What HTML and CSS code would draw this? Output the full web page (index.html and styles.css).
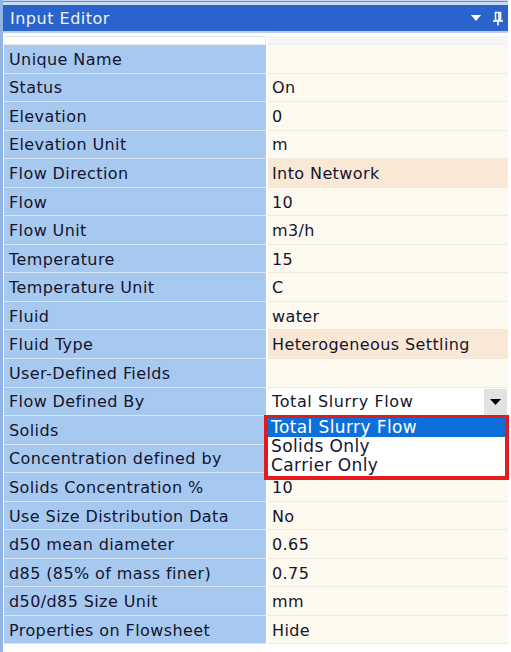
FILE: index.html
```html
<!DOCTYPE html>
<html>
<head>
<meta charset="utf-8">
<link rel="stylesheet" href="styles.css">
</head>
<body>
<div class="frame">
  <div class="top-strip"></div>
  <div class="titlebar">
    <span class="title">Input Editor</span>
    <span class="tools">
      <svg class="ico" width="12" height="8" viewBox="0 0 12 8"><path d="M1 1 H11 L6 7 Z" fill="#fff"/></svg>
      <svg class="ico" width="12" height="15" viewBox="0 0 12 15"><path d="M3.5 1.5 H8.5 V9.5 H3.5 Z" fill="none" stroke="#fff" stroke-width="1.6"/><path d="M7 2 V9" stroke="#fff" stroke-width="1.6"/><path d="M1 10 H11" stroke="#fff" stroke-width="1.6"/><path d="M6 10 V14.5" stroke="#fff" stroke-width="1.6"/></svg>
    </span>
  </div>
  <div class="under-strip"></div>
  <div class="grid">
    <div class="row head"><div class="lab"></div><div class="val"></div></div>
    <div class="row"><div class="lab">Unique Name</div><div class="val"></div></div>
    <div class="row"><div class="lab">Status</div><div class="val">On</div></div>
    <div class="row"><div class="lab">Elevation</div><div class="val">0</div></div>
    <div class="row"><div class="lab">Elevation Unit</div><div class="val">m</div></div>
    <div class="row"><div class="lab">Flow Direction</div><div class="val hl">Into Network</div></div>
    <div class="row"><div class="lab">Flow</div><div class="val">10</div></div>
    <div class="row"><div class="lab">Flow Unit</div><div class="val">m3/h</div></div>
    <div class="row"><div class="lab">Temperature</div><div class="val">15</div></div>
    <div class="row"><div class="lab">Temperature Unit</div><div class="val">C</div></div>
    <div class="row"><div class="lab">Fluid</div><div class="val">water</div></div>
    <div class="row"><div class="lab">Fluid Type</div><div class="val hl">Heterogeneous Settling</div></div>
    <div class="row"><div class="lab">User-Defined Fields</div><div class="val"></div></div>
    <div class="row"><div class="lab">Flow Defined By</div>
      <div class="val edit">
        <span class="edit-text">Total Slurry Flow</span>
        <span class="dd-btn"><svg width="11" height="6" viewBox="0 0 11 6"><path d="M0 0 H11 L5.5 6 Z" fill="#000"/></svg></span>
        <div class="dd-list">
          <div class="opt sel">Total Slurry Flow</div>
          <div class="opt">Solids Only</div>
          <div class="opt">Carrier Only</div>
        </div>
      </div>
    </div>
    <div class="row"><div class="lab">Solids</div><div class="val"></div></div>
    <div class="row"><div class="lab">Concentration defined by</div><div class="val"></div></div>
    <div class="row"><div class="lab">Solids Concentration %</div><div class="val">10</div></div>
    <div class="row"><div class="lab">Use Size Distribution Data</div><div class="val">No</div></div>
    <div class="row"><div class="lab">d50 mean diameter</div><div class="val">0.65</div></div>
    <div class="row"><div class="lab">d85 (85% of mass finer)</div><div class="val">0.75</div></div>
    <div class="row"><div class="lab">d50/d85 Size Unit</div><div class="val">mm</div></div>
    <div class="row"><div class="lab">Properties on Flowsheet</div><div class="val">Hide</div></div>
  </div>
</div>
</body>
</html>
```
FILE: styles.css
```css
html, body {
  margin: 0;
  padding: 0;
  background: #ffffff;
}
body {
  width: 511px;
  height: 652px;
  overflow: hidden;
  font-family: "DejaVu Sans", Verdana, sans-serif;
  font-size: 16px;
  letter-spacing: 0.4px;
  color: #14142e;
}
.frame {
  border-left: 3px solid #92b4e4;
  height: 652px;
  width: 505px;
}
.top-strip {
  height: 5px;
  background: linear-gradient(to bottom, #c3d6f0 0, #c3d6f0 1px, #6e8fc4 1px, #6e8fc4 2px, #c9daf1 2px, #c9daf1 5px);
}
.titlebar {
  height: 26px;
  background: #2a63c9;
  display: flex;
  align-items: center;
  justify-content: space-between;
  padding: 0 4px 0 7px;
  box-sizing: border-box;
}
.title {
  color: #eef3fd;
  font-size: 16px;
  letter-spacing: 0.5px;
}
.tools {
  display: flex;
  align-items: center;
  gap: 10px;
}
.ico { display: block; }
.under-strip {
  height: 2px;
  background: #b8cfee;
}
.grid {
  margin-left: 1px;
  width: 504px;
  padding-top: 3px;
}
.row {
  display: flex;
  height: 28.55px;
}
.row.head {
  height: 9px;
}
.row.head .lab {
  background: #ffffff;
  border: 1px solid #e6e6e6;
  border-left: none;
}
.row.head .val {
  background: #f6f6f6;
  border-bottom: 1px solid #efefef;
}
.lab {
  width: 262px;
  box-sizing: border-box;
  background: #a7c9ef;
  border-bottom: 1px solid #d5e4f6;
  padding-left: 5px;
  padding-top: 1px;
  display: flex;
  align-items: center;
  white-space: nowrap;
}
.val {
  margin-left: 2px;
  width: 240px;
  box-sizing: border-box;
  background: #fef9ee;
  border-bottom: 1px solid #efeae1;
  padding-left: 4px;
  padding-top: 1px;
  display: flex;
  align-items: center;
  white-space: nowrap;
}
.val.hl {
  background: #f9e8d5;
}
.val.edit {
  background: #ffffff;
  position: relative;
  padding-right: 1px;
  padding-top: 0;
  justify-content: space-between;
}
.edit-text {
  letter-spacing: 0.6px;
}
.dd-btn {
  width: 23px;
  height: 26px;
  background: #e2e2e2;
  display: flex;
  align-items: center;
  justify-content: center;
  margin-top: 1px;
}
.dd-list {
  position: absolute;
  left: -4px;
  top: 27px;
  width: 245px;
  height: 65px;
  box-sizing: border-box;
  border: 4px solid #e31b1f;
  border-top-width: 3px;
  border-bottom-width: 4px;
  background: #ffffff;
  z-index: 2;
}
.opt {
  height: 19.3px;
  line-height: 19.3px;
  padding-left: 3px;
  font-size: 17px;
  color: #14142e;
}
.opt.sel {
  background: #0d6fd9;
  color: #ffffff;
}
```
